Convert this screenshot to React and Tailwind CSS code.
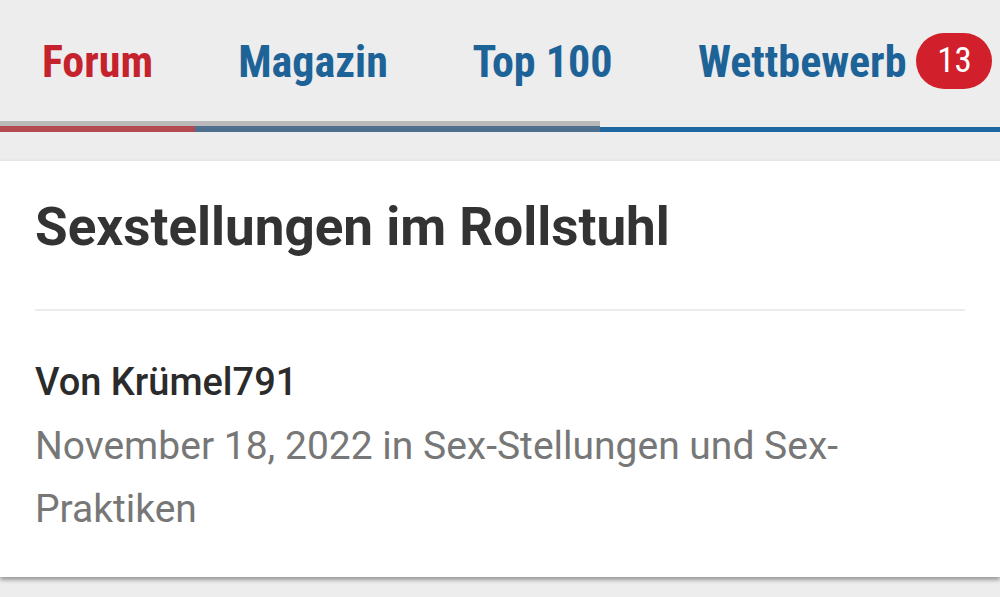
const tabs = [
  { label: "Forum", width: "w-[195px]", color: "text-[#c4232e]" },
  { label: "Magazin", width: "w-[236px]", color: "text-[#1d6398]" },
  { label: "Top 100", width: "w-[223px]", color: "text-[#1d6398]" },
];

const App = () => {
  return (
    <div className="min-h-[597px] w-[1000px] overflow-hidden bg-[#ededed] font-['Roboto',sans-serif]">
      <nav className="h-[121px] pt-[3px] flex items-center">
        {tabs.map((tab) => (
          <div
            key={tab.label}
            className={`${tab.width} text-center text-[44px] font-bold leading-none [font-stretch:condensed] ${tab.color}`}
          >
            {tab.label}
          </div>
        ))}
        <div className="flex items-center pl-[44px] gap-[10px]">
          <span className="text-[44px] font-bold leading-none [font-stretch:condensed] text-[#1d6398]">
            Wettbewerb
          </span>
          <span className="h-[56px] w-[76px] -mt-[3px] rounded-full bg-[#d1202b] text-white text-[35px] leading-none flex items-center justify-center [font-stretch:condensed]">
            13
          </span>
        </div>
      </nav>

      <div className="flex h-[11px]">
        <div className="w-[600px] flex flex-col">
          <div className="h-[5px] bg-[#b9b9b9]" />
          <div className="h-[6px] flex">
            <div className="w-[195px] bg-[#b24a52]" />
            <div className="flex-1 bg-[#4f6f8e]" />
          </div>
        </div>
        <div className="flex-1 pt-[6px]">
          <div className="h-[5px] bg-[#1f67a0]" />
        </div>
      </div>

      <div className="h-[28px]" />

      <article className="bg-white border-t border-[#e6e6e6] px-[35px] pt-[40px] pb-[36px] shadow-[0_3px_4px_rgba(0,0,0,0.35)]">
        <h1 className="text-[53px] font-bold leading-none text-[#333333]">
          Sexstellungen im Rollstuhl
        </h1>
        <div className="mt-[55px] h-[2px] bg-[#ececec]" />
        <p className="mt-[52px] text-[38px] font-medium leading-none text-[#2b2b2b]">
          Von Krümel791
        </p>
        <p className="mt-[14px] text-[39px] leading-[63px] text-[#777777]">
          November 18, 2022 in Sex-Stellungen und Sex-Praktiken
        </p>
      </article>
    </div>
  );
};

export default App;
